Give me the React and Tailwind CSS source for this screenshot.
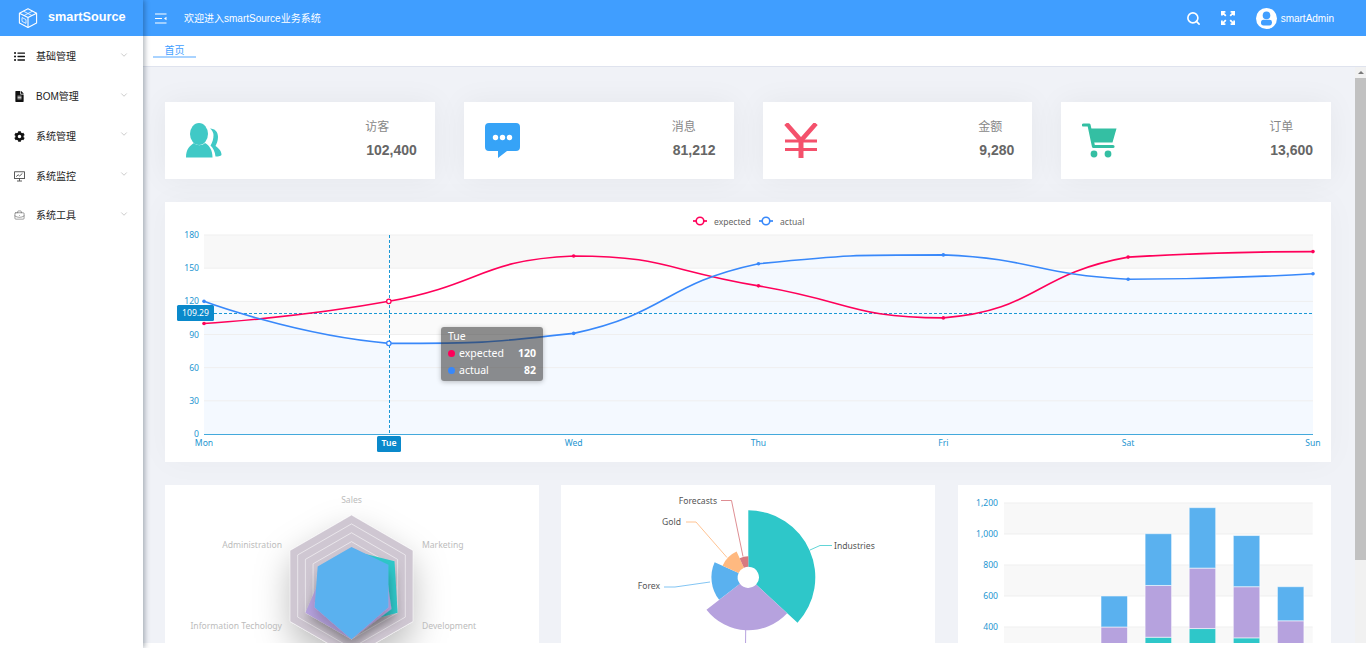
import React from 'react';
import { FaListUl, FaFileAlt, FaCog } from 'react-icons/fa';
import { ChevronDown, Search, BriefcaseBusiness } from 'lucide-react';

const CHART_FONT = '"Noto Sans", sans-serif';
const AXIS = '#1e96d1';
const POINTER = '#1a98d5';
const FS = 8.6;

const yLine = (v) => 434 - (v * 199) / 180;
const xLine = (i) => 204 + i * 184.83;

function smoothPath(pts) {
  const cps = pts.map((p, i) => {
    if (i === 0 || i === pts.length - 1) return { b: p, a: p };
    const prev = pts[i - 1];
    const next = pts[i + 1];
    const lp = Math.hypot(p[0] - prev[0], p[1] - prev[1]);
    const ln = Math.hypot(next[0] - p[0], next[1] - p[1]);
    const r = ln / (ln + lp);
    const dx = next[0] - prev[0];
    const dy = next[1] - prev[1];
    const clamp = (v, a, b) => Math.max(Math.min(a, b), Math.min(Math.max(a, b), v));
    return {
      a: [p[0] + dx * 0.5 * r, clamp(p[1] + dy * 0.5 * r, p[1], next[1])],
      b: [p[0] - dx * 0.5 * (1 - r), clamp(p[1] - dy * 0.5 * (1 - r), p[1], prev[1])],
    };
  });
  let d = `M${pts[0][0]} ${pts[0][1]}`;
  for (let i = 1; i < pts.length; i++) {
    d += ` C${cps[i - 1].a[0]} ${cps[i - 1].a[1]} ${cps[i].b[0]} ${cps[i].b[1]} ${pts[i][0]} ${pts[i][1]}`;
  }
  return d;
}

const expected = [100, 120, 161, 134, 105, 160, 165].map((v, i) => [xLine(i), yLine(v)]);
const actual = [120, 82, 91, 154, 162, 140, 145].map((v, i) => [xLine(i), yLine(v)]);

function LineChart() {
  const ticks = [0, 30, 60, 90, 120, 150, 180];
  const days = ['Mon', 'Tue', 'Wed', 'Thu', 'Fri', 'Sat', 'Sun'];
  const expPath = smoothPath(expected);
  const actPath = smoothPath(actual);
  return (
    <svg viewBox="165 202 1166 260" className="block h-[260px] w-[1166px]" fontFamily={CHART_FONT}>
      <rect x="204" y="235" width="1109" height="33" fill="#f8f8f8" />
      <rect x="204" y="301" width="1109" height="33" fill="#fafafa" />
      <rect x="204" y="367.7" width="1109" height="33" fill="#fafafa" />
      <path d={`${actPath} L1313 434 L204 434 Z`} fill="#f3f8ff" fillOpacity="0.92" />
      {ticks.slice(1).map((t) => (
        <line key={t} x1="204" x2="1313" y1={yLine(t)} y2={yLine(t)} stroke="#efefef" strokeWidth="1" />
      ))}
      <line x1="204" x2="1313" y1="434.5" y2="434.5" stroke="#43a9dc" strokeWidth="1" />
      {ticks.map((t) => (
        <text key={t} x="199" y={yLine(t) + 3} textAnchor="end" fontSize={FS} fill={AXIS}>{t}</text>
      ))}
      {days.map((d, i) =>
        i === 1 ? null : (
          <text key={d} x={xLine(i)} y="446" textAnchor="middle" fontSize={FS} fill={AXIS}>{d}</text>
        )
      )}
      <line x1="389.5" x2="389.5" y1="235" y2="434" stroke={POINTER} strokeDasharray="3 2" strokeWidth="1" />
      <line x1="204" x2="1313" y1="313.5" y2="313.5" stroke={POINTER} strokeDasharray="3 2" strokeWidth="1" />
      <path d={expPath} fill="none" stroke="#ff005a" strokeWidth="1.6" />
      <path d={actPath} fill="none" stroke="#3888fa" strokeWidth="1.6" />
      {expected.map((p, i) =>
        i === 1 ? (
          <circle key={i} cx={p[0]} cy={p[1]} r="2.2" fill="#fff" stroke="#ff005a" strokeWidth="1.3" />
        ) : (
          <circle key={i} cx={p[0]} cy={p[1]} r="1.8" fill="#ff005a" />
        )
      )}
      {actual.map((p, i) =>
        i === 1 ? (
          <circle key={i} cx={p[0]} cy={p[1]} r="2.2" fill="#fff" stroke="#3888fa" strokeWidth="1.3" />
        ) : (
          <circle key={i} cx={p[0]} cy={p[1]} r="1.8" fill="#3888fa" />
        )
      )}
      <rect x="177" y="305" width="37" height="16" rx="1.5" fill="#0a89cb" />
      <text x="195.5" y="316" textAnchor="middle" fontSize={FS} fill="#fff">109.29</text>
      <rect x="377" y="436" width="24" height="16" rx="1.5" fill="#0a89cb" />
      <text x="389" y="446" textAnchor="middle" fontSize={FS} fontWeight="600" fill="#fff">Tue</text>
      <line x1="693" x2="707" y1="221" y2="221" stroke="#ff005a" strokeWidth="1.7" />
      <circle cx="700" cy="221" r="3.8" fill="#fff" stroke="#ff005a" strokeWidth="1.6" />
      <text x="714" y="224.5" fontSize={FS} fill="#666">expected</text>
      <line x1="759" x2="773" y1="221" y2="221" stroke="#3888fa" strokeWidth="1.7" />
      <circle cx="766" cy="221" r="3.8" fill="#fff" stroke="#3888fa" strokeWidth="1.6" />
      <text x="780" y="224.5" fontSize={FS} fill="#666">actual</text>
    </svg>
  );
}

function radarPoints(vals, cx, cy, R) {
  return vals
    .map((v, i) => {
      const a = ((90 + i * 60) * Math.PI) / 180;
      return `${cx + Math.cos(a) * R * v},${cy - Math.sin(a) * R * v}`;
    })
    .join(' ');
}

function RadarChart() {
  const cx = 351.5;
  const cy = 586;
  const R = 71;
  const rings = [1, 2, 3, 4, 5, 6, 7, 8];
  const one = [1, 1, 1, 1, 1, 1];
  return (
    <svg viewBox="165 485 374 300" className="block h-[300px] w-full" fontFamily={CHART_FONT}>
      <defs>
        <filter id="rsh" x="-80%" y="-80%" width="260%" height="260%">
          <feDropShadow dx="0" dy="15" stdDeviation="17" floodColor="#000" floodOpacity="0.25" />
        </filter>
        <filter id="ssh" x="-50%" y="-50%" width="200%" height="200%">
          <feDropShadow dx="0" dy="8" stdDeviation="6" floodColor="#000" floodOpacity="0.18" />
        </filter>
      </defs>
      <polygon points={radarPoints(one, cx, cy, R)} fill="#cfc7d2" filter="url(#rsh)" />
      {rings.map((r) => (
        <polygon key={r} points={radarPoints(one, cx, cy, (R * r) / 8)} fill="none" stroke="#fff" strokeOpacity="0.55" strokeWidth="1" />
      ))}
      <polygon points={radarPoints([0.5, 0.35, 0.6, 0.55, 0.75, 0.7], cx, cy, R)} fill="#2ec7c9" filter="url(#ssh)" />
      <polygon points={radarPoints([0.4, 0.45, 0.75, 0.75, 0.65, 0.55], cx, cy, R)} fill="#b6a2de" filter="url(#ssh)" />
      <polygon points={radarPoints([0.55, 0.55, 0.6, 0.75, 0.6, 0.6], cx, cy, R)} fill="#5ab1ef" filter="url(#ssh)" />
      <g fontSize={FS} fill="#bcbcbc">
        <text x="351.5" y="503" textAnchor="middle">Sales</text>
        <text x="282" y="548" textAnchor="end">Administration</text>
        <text x="422" y="548">Marketing</text>
        <text x="282" y="629" textAnchor="end">Information Techology</text>
        <text x="422" y="629">Development</text>
      </g>
    </svg>
  );
}

function sector(cx, cy, r0, r1, a0, a1) {
  const p = (r, a) => {
    const t = ((a - 90) * Math.PI) / 180;
    return `${cx + Math.cos(t) * r} ${cy + Math.sin(t) * r}`;
  };
  const large = a1 - a0 > 180 ? 1 : 0;
  return `M${p(r0, a0)} L${p(r1, a0)} A${r1} ${r1} 0 ${large} 1 ${p(r1, a1)} L${p(r0, a1)} A${r0} ${r0} 0 ${large} 0 ${p(r0, a0)} Z`;
}

function PieChart() {
  const cx = 748.3;
  const cy = 577.3;
  const data = [
    { v: 320, c: '#2ec7c9' },
    { v: 240, c: '#b6a2de' },
    { v: 149, c: '#5ab1ef' },
    { v: 100, c: '#ffb980' },
    { v: 59, c: '#d87a80' },
  ];
  const total = data.reduce((s, d) => s + d.v, 0);
  let a = 0;
  const slices = data.map((d) => {
    const sweep = (d.v / total) * 360;
    const r = 10.6 + (d.v / 320) * 56.4;
    const path = sector(cx, cy, 10.6, r, a, a + sweep);
    a += sweep;
    return { path, c: d.c };
  });
  return (
    <svg viewBox="561 485 374 300" className="block h-[300px] w-full" fontFamily={CHART_FONT}>
      {slices.map((s) => (
        <path key={s.c} d={s.path} fill={s.c} />
      ))}
      <g fill="none" strokeWidth="1">
        <polyline points="810,550 820,545.5 832,545.5" stroke="#2ec7c9" strokeOpacity="0.75" />
        <polyline points="745.7,630 745.5,650" stroke="#b6a2de" />
        <polyline points="710,582 675,587 664,587" stroke="#5ab1ef" strokeOpacity="0.75" />
        <polyline points="727,557.5 696,522 686,522" stroke="#ffb980" strokeOpacity="0.85" />
        <polyline points="743,556.5 731.5,500.5 721,500.5" stroke="#d87a80" strokeOpacity="0.85" />
      </g>
      <g fontSize={FS} fill="#555">
        <text x="834" y="549">Industries</text>
        <text x="660" y="589" textAnchor="end">Forex</text>
        <text x="681" y="525" textAnchor="end">Gold</text>
        <text x="717" y="503.5" textAnchor="end">Forecasts</text>
      </g>
    </svg>
  );
}

function BarChart() {
  const y = (v) => 503 + ((1200 - v) * 31) / 200;
  const ticks = [1200, 1000, 800, 600, 400];
  const a = [79, 52, 200, 334, 390, 330, 220];
  const b = [80, 52, 200, 334, 390, 330, 220];
  const c = [30, 52, 200, 334, 390, 330, 220];
  const step = 308.7 / 7;
  return (
    <svg viewBox="958 485 373 300" className="block h-[300px] w-full" fontFamily={CHART_FONT}>
      <rect x="1004" y={y(1200)} width="308.7" height="31" fill="#f8f8f8" />
      <rect x="1004" y={y(800)} width="308.7" height="31" fill="#f8f8f8" />
      <rect x="1004" y={y(400)} width="308.7" height="31" fill="#f8f8f8" />
      {ticks.map((t) => (
        <line key={t} x1="1004" x2="1312.7" y1={y(t)} y2={y(t)} stroke="#efefef" />
      ))}
      {ticks.map((t) => (
        <text key={t} x="998" y={y(t) + 3} textAnchor="end" fontSize={FS} fill={AXIS}>
          {t.toLocaleString('en-US')}
        </text>
      ))}
      {a.map((_, i) => {
        const x = 1004 + step * i + (step - 26.5) / 2;
        const h1 = a[i];
        const h2 = a[i] + b[i];
        const h3 = h2 + c[i];
        return (
          <g key={i} stroke="#fff" strokeOpacity="0.55" strokeWidth="1">
            <rect x={x} y={y(h1)} width="26.5" height={y(0) - y(h1)} fill="#2ec7c9" />
            <rect x={x} y={y(h2)} width="26.5" height={y(h1) - y(h2)} fill="#b6a2de" />
            <rect x={x} y={y(h3)} width="26.5" height={y(h2) - y(h3)} fill="#5ab1ef" />
          </g>
        );
      })}
    </svg>
  );
}

function CubeLogo() {
  return (
    <svg viewBox="0 0 20 20" className="h-5 w-5" fill="none" stroke="#fff" strokeWidth="1.1" strokeLinejoin="round">
      <path d="M10 .8 18.6 5.2V15L10 19.4 1.4 15V5.2Z" />
      <path d="M1.4 5.2 10 9.6 18.6 5.2M10 9.6V19.4" />
      <path d="M5.5 3.2 14 7.6M14.5 3.2 6 7.6" strokeWidth="0.8" />
      <path d="M4 9.5 8 11.6V15.4L4 13.4Z" strokeWidth="0.8" />
    </svg>
  );
}

function ToggleIcon() {
  return (
    <svg viewBox="0 0 12 11" className="h-[11px] w-3" fill="#fff">
      <rect x="0" y="0.5" width="11.5" height="1" />
      <rect x="0" y="5" width="7" height="1" />
      <rect x="0" y="9.5" width="11.5" height="1" />
      <path d="M11.5 3.7V7.3L9 5.5Z" />
    </svg>
  );
}

function FullscreenIcon() {
  return (
    <svg viewBox="0 0 14 14" className="h-[14px] w-[14px]" fill="none" stroke="#fff" strokeWidth="1.8">
      <path d="M0.9 4.4V0.9H4.4M0.9 0.9 4.8 4.8" />
      <path d="M13.1 4.4V0.9H9.6M13.1 0.9 9.2 4.8" />
      <path d="M0.9 9.6V13.1H4.4M0.9 13.1 4.8 9.2" />
      <path d="M13.1 9.6V13.1H9.6M13.1 13.1 9.2 9.2" />
    </svg>
  );
}

function Avatar() {
  return (
    <svg viewBox="0 0 21 21" className="h-[21px] w-[21px]">
      <circle cx="10.5" cy="10.5" r="10.5" fill="#fff" />
      <circle cx="10.5" cy="7.4" r="3.8" fill="#409eff" />
      <rect x="5" y="11.8" width="11" height="5.6" rx="2.6" fill="#409eff" />
    </svg>
  );
}

function MonitorIcon() {
  return (
    <svg viewBox="0 0 11 11" className="h-[11px] w-[11px]" fill="none" stroke="#333" strokeWidth="0.8">
      <rect x="0.6" y="0.8" width="9.8" height="6.8" />
      <path d="M5.5 7.6V9.8M3 10H8" />
      <path d="M2.2 5.6 4.2 3.8 5.6 5 8.4 2.4" />
    </svg>
  );
}

function UsersIcon() {
  return (
    <svg viewBox="0 0 36 35" className="h-[35px] w-9" fill="#40c9c6">
      <ellipse cx="13" cy="11" rx="9" ry="11" />
      <path d="M0 34.5C0 26 4 22.5 8 20C11 23 16 23 19 20C23.5 22.5 26.5 27 26.5 34.5Z" />
      <path d="M24 5.5C29 5.5 32 9 32 14C32 18 30.5 21 29.5 23C32.5 25 35.5 28 35.5 31.5C35.5 33 33 33.5 29.5 33.5C29 28.5 27 25 24.5 22.5C26.5 19.5 27.5 15.5 27.5 12C27.5 9.5 26 7 24 5.5Z" />
    </svg>
  );
}

function MessageIcon() {
  return (
    <svg viewBox="0 0 35 35" className="h-[35px] w-[35px]">
      <path d="M4 0H31A4 4 0 0 1 35 4V24A4 4 0 0 1 31 28H22L13 35V28H4A4 4 0 0 1 0 24V4A4 4 0 0 1 4 0Z" fill="#36a3f7" />
      <circle cx="10.5" cy="14.5" r="2.7" fill="#fff" />
      <circle cx="17.5" cy="14.5" r="2.7" fill="#fff" />
      <circle cx="24.5" cy="14.5" r="2.7" fill="#fff" />
    </svg>
  );
}

function YenIcon() {
  return (
    <svg viewBox="0 0 34 35" className="h-[35px] w-[34px]" fill="none" stroke="#f4516c">
      <path d="M2 0.5 17 17.5 32 0.5" strokeWidth="4.6" />
      <path d="M1 18H33M1 26.5H33" strokeWidth="2.8" />
      <path d="M17 16V35" strokeWidth="5" />
    </svg>
  );
}

function CartIcon() {
  return (
    <svg viewBox="0 0 35 35" className="h-[35px] w-[35px]" fill="#34bfa3">
      <path d="M1.5 2H7L11.5 23.5H31" fill="none" stroke="#34bfa3" strokeWidth="3.2" strokeLinecap="round" strokeLinejoin="round" />
      <path d="M8.5 5.5H34.5L30.5 19.5H11Z" />
      <circle cx="12" cy="31" r="3.4" />
      <circle cx="26" cy="31" r="3.4" />
    </svg>
  );
}

const menu = [
  { label: '基础管理', icon: <FaListUl size={11} color="#111" /> },
  { label: 'BOM管理', icon: <FaFileAlt size={11} color="#111" /> },
  { label: '系统管理', icon: <FaCog size={11} color="#111" /> },
  { label: '系统监控', icon: <MonitorIcon /> },
  { label: '系统工具', icon: <BriefcaseBusiness size={11} strokeWidth={1} color="#333" /> },
];

const stats = [
  { label: '访客', value: '102,400', icon: <UsersIcon /> },
  { label: '消息', value: '81,212', icon: <MessageIcon /> },
  { label: '金额', value: '9,280', icon: <YenIcon /> },
  { label: '订单', value: '13,600', icon: <CartIcon /> },
];

export default function App() {
  return (
    <div className="flex h-[648px] w-[1366px] overflow-hidden bg-white font-['Liberation_Sans','Noto_Sans_CJK_SC',sans-serif]">
      <aside className="relative z-20 h-[648px] w-[143px] shrink-0 bg-white shadow-[2px_0_5px_rgba(0,21,41,0.3)]">
        <div className="flex h-9 items-center gap-[10px] bg-[#409eff] pl-[18px]">
          <CubeLogo />
          <span className="text-[12.7px] font-bold text-white">smartSource</span>
        </div>
        <ul className="pt-[1px]">
          {menu.map((m) => (
            <li key={m.label} className="flex h-[39.75px] items-center pl-[14px] pr-[14px] text-[10px] text-[#222]">
              <span className="flex w-[22px] items-center">{m.icon}</span>
              <span className="flex-1">{m.label}</span>
              <ChevronDown size={10} strokeWidth={1.2} color="#999" className="-mt-[4px]" />
            </li>
          ))}
        </ul>
      </aside>

      <div className="flex min-w-0 flex-1 flex-col">
        <header className="flex h-9 shrink-0 items-center bg-[#409eff] pl-3 pr-8 text-[10px] text-white">
          <ToggleIcon />
          <span className="ml-[17px] flex-1">欢迎进入smartSource业务系统</span>
          <Search size={15} strokeWidth={2.6} color="#fff" />
          <span className="ml-[20px]">
            <FullscreenIcon />
          </span>
          <span className="ml-[21px]">
            <Avatar />
          </span>
          <span className="ml-[4px]">smartAdmin</span>
        </header>

        <div className="h-[31px] shrink-0 border-b border-[#dfe3ee] bg-white pl-[10px] pt-[9px]">
          <div className="w-[43px] border-b-2 border-[#a9d3ff] text-center text-[10px] leading-[11px] text-[#409eff]">
            首页
          </div>
        </div>

        <main className="flex h-[576px] shrink-0">
          <div className="min-w-0 flex-1 overflow-hidden bg-[#f0f2f7] pl-[22px] pr-[24px] pt-[35px]">
            <div className="grid grid-cols-4 gap-[29px]">
              {stats.map((s) => (
                <div key={s.label} className="flex h-[77px] justify-between bg-white pl-[21px] pr-[18px] shadow-[0_0_30px_rgba(0,0,0,0.05)]">
                  <div className="flex items-center">{s.icon}</div>
                  <div className="mt-[17px] text-left">
                    <div className="-ml-[1px] text-[12px] leading-[16px] text-[#888]">{s.label}</div>
                    <div className="mt-[7px] text-[14px] font-bold leading-[16px] text-[#666]">{s.value}</div>
                  </div>
                </div>
              ))}
            </div>

            <div className="relative mt-[23px] h-[260px] bg-white shadow-[0_0_30px_rgba(0,0,0,0.03)]">
              <LineChart />
              <div className="absolute left-[276px] top-[125px] w-[102px] rounded-[3px] bg-[rgba(50,50,50,0.55)] px-[7px] pb-[2px] pt-[1px] text-[10.5px] leading-[17px] text-white shadow-[0_1px_5px_rgba(0,0,0,0.25)] font-['Noto_Sans',sans-serif]">
                <div>Tue</div>
                <div className="flex items-center">
                  <span className="mr-[4px] h-[7px] w-[7px] rounded-full bg-[#ff005a]" />
                  <span className="flex-1">expected</span>
                  <span className="font-bold">120</span>
                </div>
                <div className="flex items-center">
                  <span className="mr-[4px] h-[7px] w-[7px] rounded-full bg-[#3888fa]" />
                  <span className="flex-1">actual</span>
                  <span className="font-bold">82</span>
                </div>
              </div>
            </div>

            <div className="mt-[23px] grid grid-cols-3 gap-x-[22px]">
              <div className="h-[300px] bg-white"><RadarChart /></div>
              <div className="h-[300px] bg-white"><PieChart /></div>
              <div className="ml-[1px] h-[300px] bg-white"><BarChart /></div>
            </div>
          </div>

          <div className="flex w-[11px] shrink-0 flex-col bg-[#f1f1f1]">
            <div className="flex h-[11px] items-center justify-center">
              <span className="h-0 w-0 border-x-[3px] border-b-[3px] border-x-transparent border-b-[#7a7a7a]" />
            </div>
            <div className="h-[482px] bg-[#c1c1c1]" />
          </div>
        </main>
      </div>
    </div>
  );
}
